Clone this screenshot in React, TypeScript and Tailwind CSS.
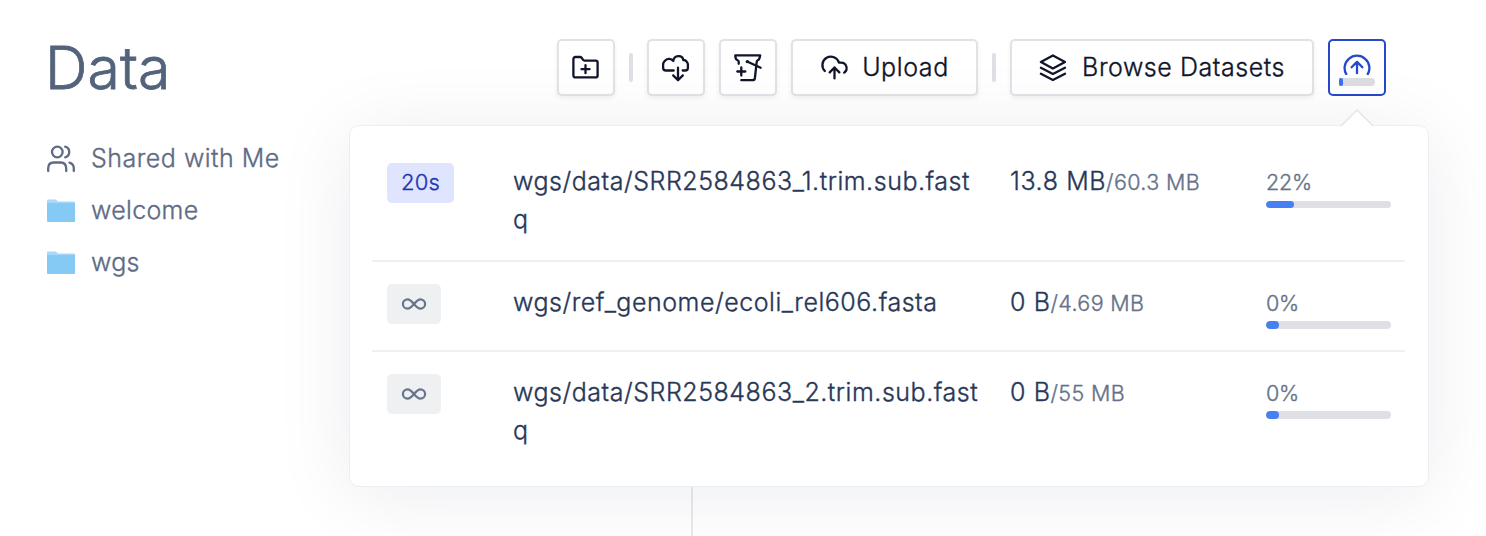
import React from "react";

type IconProps = { className?: string; children: React.ReactNode; box?: string };

function Icon({ className = "h-7 w-7", box = "0 0 28 28", children }: IconProps) {
  return (
    <svg
      viewBox={box}
      className={`shrink-0 ${className}`}
      fill="none"
      stroke="currentColor"
      strokeWidth="2.3"
      strokeLinecap="round"
      strokeLinejoin="round"
    >
      {children}
    </svg>
  );
}

const FolderPlus = () => (
  <Icon>
    <path d="M1.400 5a2 2 0 0 1 2-2H8a2 2 0 0 1 1.700.9l1.200 1.800a2 2 0 0 0 1.700.9h11a2 2 0 0 1 2 2v12.800a2 2 0 0 1-2 2H3.400a2 2 0 0 1-2-2z" />
    <path d="M13.500 11.200v8M9.500 15.200h8" />
  </Icon>
);

const CloudDownload = () => (
  <Icon>
    <g transform="translate(0 -.5)">
      <path d="M11.700 17H4Q1.100 17 1.100 14.200V11Q1.100 9.300 2.300 8L3.500 6.700C5.600 4.600 9.200 5 11.300 7.400C11.800 1.200 20.600 1 21.300 6.500Q23.200 6.300 24.400 7.800Q25.900 9.200 25.900 11V14.200Q25.900 17 23.200 17H20.700" />
      <path d="M16 14.200v12.400M11.200 21.900l4.800 4.800 4.800-4.800" />
    </g>
  </Icon>
);

const BucketPlus = () => (
  <Icon>
    <g transform="translate(0 -.5)">
      <path d="M4.700 10.300V8.300Q4.700 7.200 3.500 6.700Q1.800 6 1.500 4.300L1.300 1.800H26.200L25.500 4.800Q25.200 6.300 23.500 7Q22.800 7.500 22.700 8.500L20.900 24.500Q20.600 26.700 18.500 26.700H7.300" />
      <path d="M7.300 14v8M3.300 18h8" />
      <path d="M13.700 8.200L26.600 14.300" />
      <circle cx="13.300" cy="8.100" r="1.700" fill="currentColor" stroke="none" />
    </g>
  </Icon>
);

const CloudUpload = () => (
  <Icon className="h-[29px] w-[29px]" box="0 0 24 24">
    <g strokeWidth="1.9">
      <path d="M4 14.899A7 7 0 1 1 15.710 8h1.790a4.500 4.500 0 0 1 2.500 8.242" />
      <path d="M12 12v9M16 16l-4-4-4 4" />
    </g>
  </Icon>
);

const Layers = () => (
  <Icon>
    <g transform="translate(0 -.5)">
      <path d="M13.900 1.900L26 8.400L13.900 15L1.900 8.400Z" />
      <path d="M1.900 14.200L13.900 20.400L26 14.200" />
      <path d="M1.900 20.300L13.900 26.600L26 20.300" />
    </g>
  </Icon>
);

const Users = () => (
  <Icon>
    <circle cx="10.300" cy="7" r="5.300" />
    <path d="M18.200 1.700A5.500 5.500 0 0 1 18.200 12.300" />
    <path d="M1.200 26V23.500Q1.200 17.500 6.700 17.500H13.600Q19.200 17.500 19.200 23.500V26" />
    <path d="M22.500 17.600Q26.800 18.900 26.800 23.500V26" />
  </Icon>
);

const Folder = () => (
  <svg viewBox="0 0 28 24" className="h-6 w-7 shrink-0">
    <path d="M0 1.500Q0 .5 1 .5H8Q9 .5 9.700 1.300L11 2.500H27Q28 2.500 28 3.500V10H0Z" fill="#a6d9fb" />
    <path d="M0 3.900H28V22Q28 23 27 23H1Q0 23 0 22Z" fill="#84caf5" />
  </svg>
);

const Infinity = () => (
  <svg viewBox="0 0 26 14" className="h-[14px] w-[26px]" fill="none" stroke="currentColor" strokeWidth="2.2">
    <path d="M13 7C10.500 4 9 2.300 6.600 2.300A4.700 4.700 0 0 0 6.600 11.700C9 11.700 10.500 10 13 7C15.500 4 17 2.300 19.400 2.300A4.700 4.700 0 0 1 19.400 11.700C17 11.700 15.500 10 13 7Z" />
  </svg>
);

const buttonStyle =
  "flex h-[57px] shrink-0 items-center justify-center rounded-[5px] border-2 border-[#e1e2e8] bg-white text-[#10152a] shadow-[0_2px_4px_rgba(20,25,50,0.07)]";

function Button({ width, children }: { width: string; children: React.ReactNode }) {
  return <button className={`${buttonStyle} ${width}`}>{children}</button>;
}

const Separator = () => <div className="h-[29px] w-1 rounded-sm bg-[#dfe0e5]" />;

const uploads = [
  { eta: "20s", path: "wgs/data/SRR2584863_1.trim.sub.fastq", done: "13.8 MB", total: "60.3 MB", pct: 22, height: "h-[121px]", label: "h-[38px]", bar: "h-[7px]" },
  { eta: "∞", path: "wgs/ref_genome/ecoli_rel606.fasta", done: "0 B", total: "4.69 MB", pct: 0, height: "h-[90px]", label: "h-[37px]", bar: "h-2" },
  { eta: "∞", path: "wgs/data/SRR2584863_2.trim.sub.fastq", done: "0 B", total: "55 MB", pct: 0, height: "h-[119px]", label: "h-[37px]", bar: "h-2" },
];

function UploadRow({ item, last }: { item: (typeof uploads)[number]; last: boolean }) {
  const active = item.eta !== "∞";
  return (
    <div className={`flex items-start pt-[22px] pl-[15px] ${item.height} ${last ? "" : "border-b-2 border-[#efeff4]"}`}>
      <div className="w-[126px] shrink-0">
        <div
          className={`flex h-10 w-fit items-center justify-center rounded-[5px] px-[14px] pb-px text-[22px] tracking-[0.25px] ${
            active ? "bg-[#e0e5ff] text-[#1e34b4]" : "bg-[#eff0f2] text-[#68738c]"
          }`}
        >
          {active ? item.eta : <Infinity />}
        </div>
      </div>
      <div className="-mt-px w-[468px] shrink-0 text-[25px] leading-[38px] tracking-[0.53px] break-all text-[#283757]">{item.path}</div>
      <div className="-mt-px ml-[29px] w-[256px] shrink-0 text-[25px] leading-[38px] tracking-[0.58px] whitespace-nowrap text-[#283757]">
        {item.done}
        <span className="text-[21.5px] tracking-[0.36px] text-[#65718a]">/{item.total}</span>
      </div>
      <div className="w-[125px] shrink-0">
        <div className={`text-[21.5px] leading-[39px] tracking-[-0.2px] text-[#65718a] ${item.label}`}>{item.pct}%</div>
        <div className={`overflow-hidden rounded-full bg-[#dfe0e5] ${item.bar}`}>
          <div className="h-full min-w-[13px] rounded-full bg-[#4680f2]" style={{ width: `${item.pct}%` }} />
        </div>
      </div>
    </div>
  );
}

export default function App() {
  return (
    <div className="relative flex h-[536px] w-[1486px] flex-col overflow-hidden bg-white font-['Inter',sans-serif] font-light [-webkit-text-stroke:0.35px]">
      <header className="flex h-[135px] shrink-0 items-start pt-[39px] pl-[45px]">
        <h1 className="-mt-px w-[512px] text-[59px] leading-[60px] tracking-[0.1px] text-[#54637c] [-webkit-text-stroke:0.8px]">Data</h1>
        <div className="flex items-center gap-[14px]">
          <Button width="w-[58px]"><FolderPlus /></Button>
          <Separator />
          <Button width="w-[58px]"><CloudDownload /></Button>
          <Button width="w-[58px]"><BucketPlus /></Button>
          <Button width="w-[187px]">
            <CloudUpload />
            <span className="ml-[13px] text-[25px] tracking-[0.6px]">Upload</span>
          </Button>
          <Separator />
          <Button width="w-[304px]">
            <Layers />
            <span className="ml-[15px] text-[25px] tracking-[0.55px]">Browse Datasets</span>
          </Button>
          <button className="flex h-[57px] w-[58px] shrink-0 flex-col items-center rounded-[5px] border-2 border-[#2549cb] bg-white pt-3 text-[#2549cb]">
            <Icon className="h-[22px] w-7" box="0 0 28 22">
              <path strokeLinecap="butt" d="M3.700 22A12.400 12.400 0 1 1 24.300 22" />
              <path d="M14 20.200V9.200M8.600 14.300L14 8.900L19.400 14.300" />
            </Icon>
            <span className="mt-[3px] flex h-2 w-9 shrink-0 overflow-hidden rounded-r-full rounded-l-sm bg-[#dcdde2]">
              <span className="h-full w-1 rounded-sm bg-[#3b72f4]" />
            </span>
          </button>
        </div>
      </header>

      <div className="flex min-h-0 flex-1">
        <nav className="flex w-[693px] shrink-0 flex-col border-r-2 border-[#e9eaef] pl-[47px] text-[25px] tracking-[0.5px] text-[#5f6b84]">
          <a className="flex h-[50px] items-center gap-4 pb-[3px]"><Users />Shared with Me</a>
          <a className="flex h-[52px] items-center gap-4 tracking-[0.3px]"><Folder />welcome</a>
          <a className="flex h-[52px] items-center gap-4 tracking-[0.3px]"><Folder />wgs</a>
        </nav>
      </div>

      <section className="absolute top-[125px] left-[349px] h-[362px] w-[1080px] rounded-[10px] border border-[#eceef1] bg-white pt-[15px] pr-[23px] pl-[22px] shadow-[0_8px_80px_rgba(15,23,60,0.08)]">
        <svg viewBox="0 0 34 18" className="absolute top-[-17px] left-[990px] h-[18px] w-[34px]">
          <path d="M1 17L17 1L33 17V18H1Z" fill="white" />
          <path d="M1 17L17 1L33 17" fill="none" stroke="#e2e4e8" strokeWidth="1.4" />
        </svg>
        {uploads.map((item, i) => (
          <UploadRow key={item.path} item={item} last={i === uploads.length - 1} />
        ))}
      </section>
    </div>
  );
}
